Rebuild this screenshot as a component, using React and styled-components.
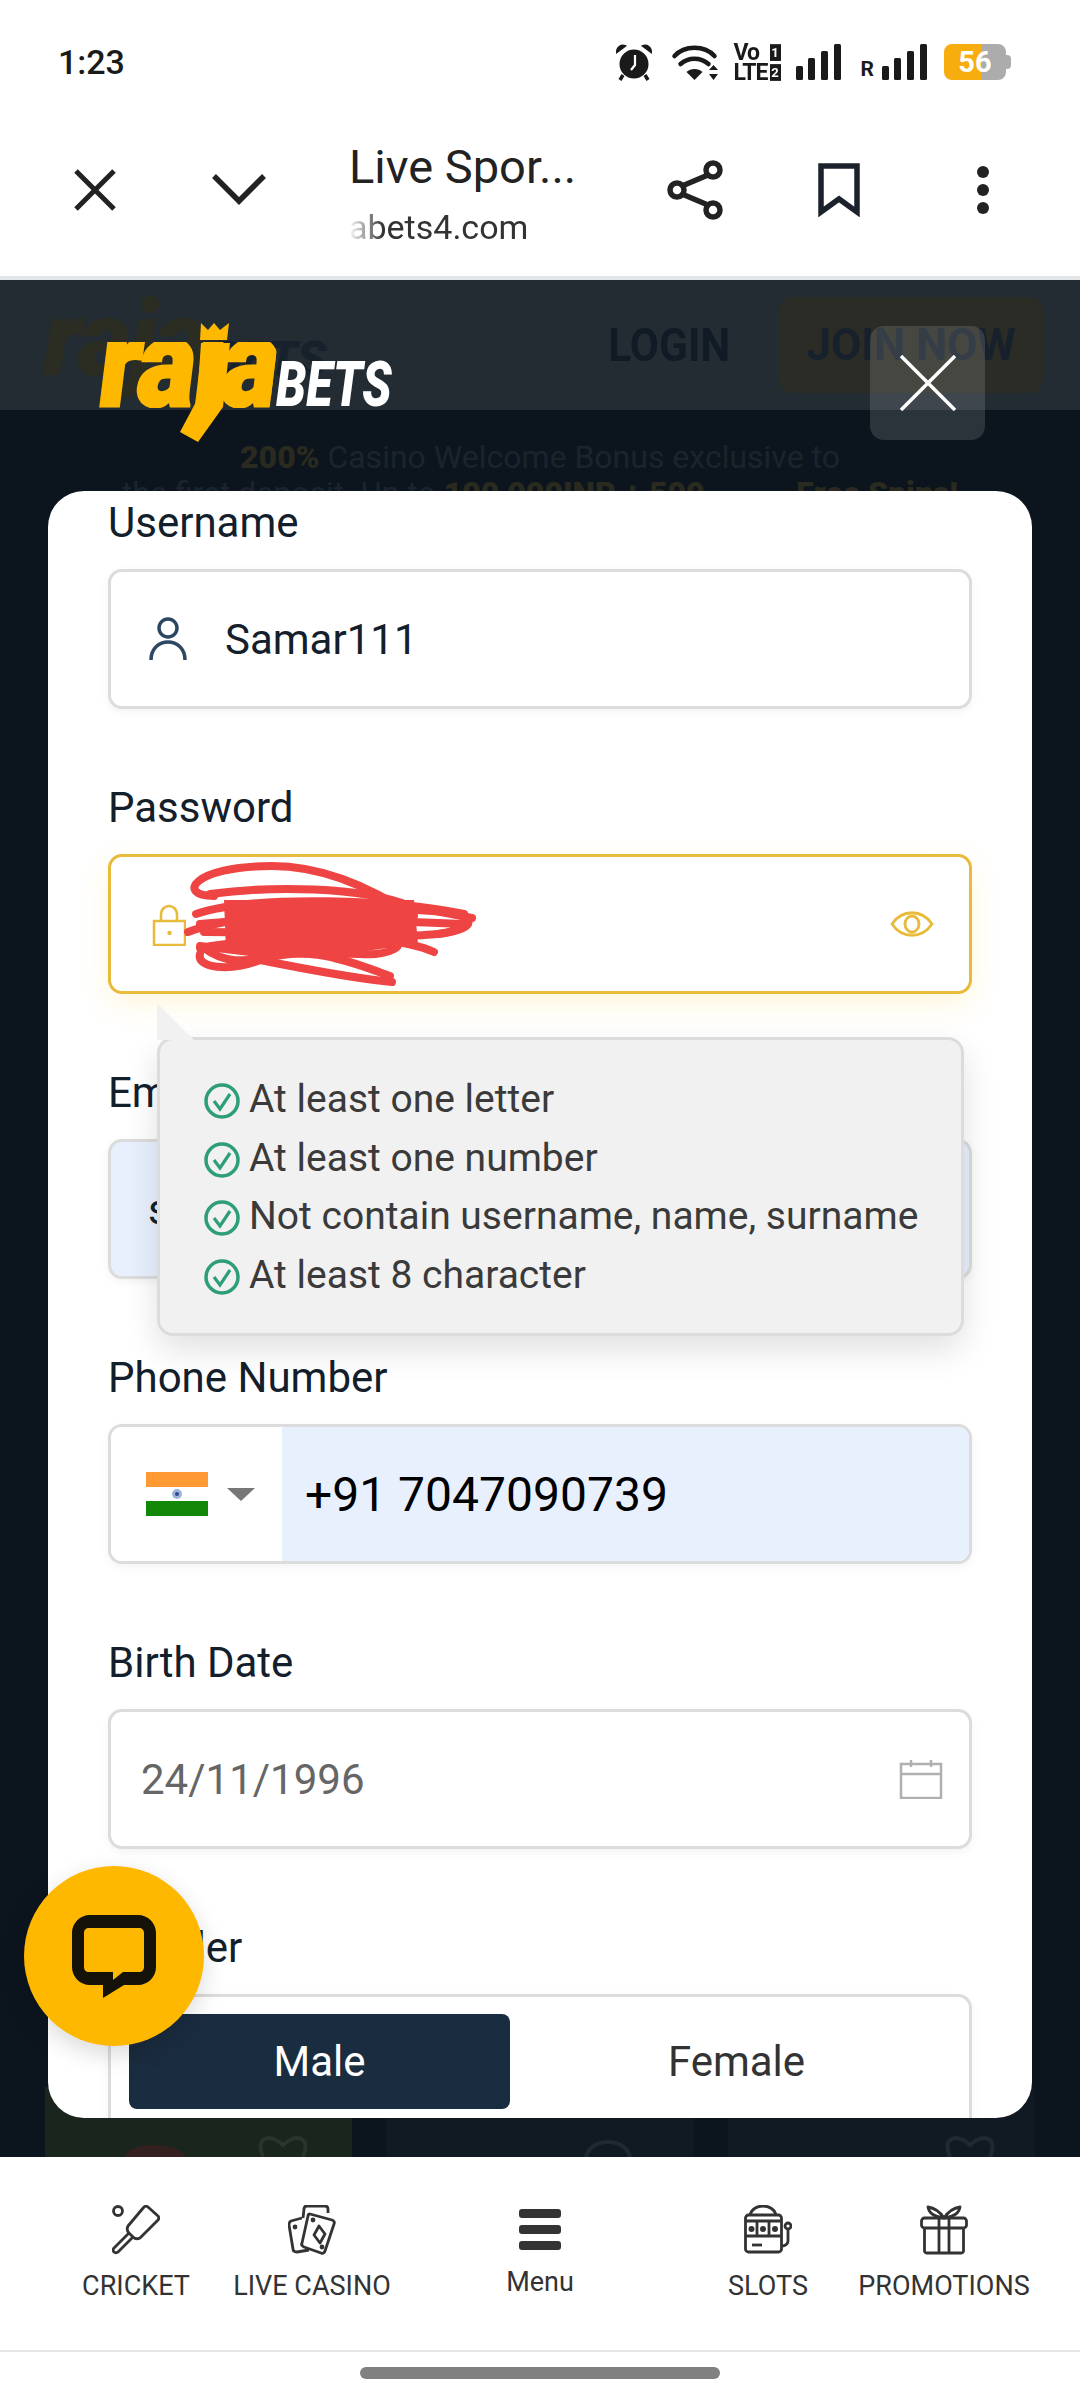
import React from "react";
import styled, { createGlobalStyle } from "styled-components";

const GlobalStyle = createGlobalStyle`
  html, body {
    margin: 0;
    padding: 0;
    background: #fff;
    font-family: Roboto, "Liberation Sans", sans-serif;
  }
  * { box-sizing: border-box; }
`;

const Screen = styled.div`
  width: 1080px;
  height: 2400px;
  display: flex;
  flex-direction: column;
  overflow: hidden;
  background: #fff;
`;

/* status bar */
const StatusBar = styled.div`
  height: 88px;
  flex: none;
  display: flex;
  align-items: center;
  padding: 36px 74px 0 58px;
  color: #1a1a1a;
`;
const Clock = styled.div`
  font-size: 34px;
  font-weight: 500;
  margin-right: auto;
`;
const StatusIcons = styled.div`
  display: flex;
  align-items: center;
  height: 42px;
`;
const AlarmIcon = styled.svg`
  margin-right: 17px;
`;
const NetLabel = styled.div`
  display: grid;
  grid-template-columns: auto auto;
  column-gap: 2px;
  margin: 0 15px 0 12px;
  font-size: 23px;
  line-height: 19px;
  font-weight: 700;
  letter-spacing: -1px;
  transform: scaleY(1.05);
`;
const SimTag = styled.span`
  justify-self: end;
  width: 11px;
  height: 16px;
  margin-top: 2px;
  background: #1a1a1a;
  color: #fff;
  font-size: 13px;
  line-height: 16px;
  text-align: center;
  letter-spacing: 0;
`;
const Roaming = styled.span`
  font-size: 21px;
  font-weight: 700;
  margin: 14px 8px 0 20px;
`;
const Battery = styled.div`
  width: 62px;
  height: 36px;
  margin-left: 17px;
  border-radius: 8px;
  background: linear-gradient(to right, #f8ad0e 0 61%, #acacac 61% 100%);
  color: #fff;
  font-size: 29px;
  font-weight: 700;
  line-height: 36px;
  text-align: center;
  position: relative;
  &::after {
    content: "";
    position: absolute;
    right: -5px;
    top: 11px;
    width: 5px;
    height: 14px;
    border-radius: 0 4px 4px 0;
    background: #acacac;
  }
`;

/* browser bar */
const BrowserBar = styled.div`
  height: 192px;
  flex: none;
  display: flex;
  align-items: center;
  gap: 48px;
  padding: 0 49px 0 47px;
  border-bottom: 4px solid #e3e6e8;
`;
const BarIcon = styled.div`
  width: 96px;
  height: 96px;
  flex: none;
  display: flex;
  align-items: center;
  justify-content: center;
  margin-top: 16px;
`;
const TitleBlock = styled.div`
  flex: 1;
  margin: 24px 16px 0 14px;
  overflow: hidden;
`;
const PageTitle = styled.div`
  font-size: 47px;
  line-height: 54px;
  color: #222;
  white-space: nowrap;
`;
const PageUrl = styled.div`
  font-size: 34px;
  line-height: 44px;
  margin-top: 11px;
  color: #333;
  -webkit-mask-image: linear-gradient(to right, transparent 0, #000 34px);
  mask-image: linear-gradient(to right, transparent 0, #000 34px);
`;

/* site behind the dialog */
const Viewport = styled.div`
  flex: 1;
  position: relative;
  display: flex;
  flex-direction: column;
  background: #0c151e;
  overflow: hidden;
`;
const SiteHeader = styled.div`
  height: 130px;
  flex: none;
  display: flex;
  align-items: center;
  padding: 0 37px 0 43px;
  background: #232b33;
`;
const GhostLogo = styled.div`
  margin-right: auto;
  margin-top: -12px;
  font-weight: 900;
  font-style: italic;
  font-size: 106px;
  line-height: 1;
  letter-spacing: -3px;
  color: #2b2c22;
  white-space: nowrap;
  span {
    font-size: 48px;
    letter-spacing: 0;
    color: #17212b;
    margin-left: 6px;
  }
`;
const GhostLogin = styled.div`
  font-size: 46px;
  font-weight: 700;
  color: #111b25;
  transform: scaleX(0.92);
  margin-right: 44px;
`;
const GhostJoin = styled.div`
  width: 264px;
  height: 96px;
  border-radius: 14px;
  background: #2c2c26;
  color: #17212c;
  font-size: 44px;
  font-weight: 700;
  line-height: 96px;
  text-align: center;
  white-space: nowrap;
`;
const Promo = styled.div`
  margin-top: 29px;
  text-align: center;
  font-size: 32px;
  line-height: 36px;
  color: #1b242d;
  white-space: nowrap;
  b {
    font-weight: 900;
    color: #2a2a1f;
  }
  small {
    font-size: 18px;
    font-weight: 700;
  }
`;
const TileRow = styled.div`
  margin-top: auto;
  display: flex;
  gap: 34px;
  padding: 0 45px;
  height: 70px;
`;
const Tile = styled.div`
  flex: 1;
  background: ${(p) => p.$tint};
  display: flex;
  align-items: flex-end;
`;

/* dialog */
const Overlay = styled.div`
  position: absolute;
  inset: 0;
  padding: 0 48px;
  display: flex;
  flex-direction: column;
`;
const DialogTop = styled.div`
  height: 211px;
  flex: none;
  position: relative;
  display: flex;
`;
const Logo = styled.div`
  position: relative;
  display: flex;
  align-items: flex-start;
  margin: 65px 0 0 52px;
  height: 62px;
`;
const RajaWord = styled.span`
  display: block;
  width: 178px;
  margin: -52px 0 0 -8px;
  font-size: 124px;
  line-height: 142px;
  font-weight: 900;
  letter-spacing: -2px;
  color: #ffb800;
  -webkit-text-stroke: 3px #ffb800;
  transform: scaleX(0.88) skewX(-8deg);
  transform-origin: 0 100%;
  white-space: nowrap;
  clip-path: inset(49px -20px 27px -20px);
`;
const BetsWord = styled.span`
  display: block;
  margin: 4px 0 0 6px;
  font-size: 62px;
  line-height: 72px;
  font-weight: 900;
  font-style: italic;
  color: #fff;
  transform: scaleX(0.78);
  transform-origin: 0 50%;
`;
const LogoMarks = styled.svg`
  position: absolute;
  left: 0;
  top: -25px;
  overflow: visible;
`;
const CloseButton = styled.div`
  width: 115px;
  height: 114px;
  margin: 46px 47px 0 auto;
  border-radius: 14px;
  background: rgba(255, 255, 255, 0.13);
  display: flex;
  align-items: center;
  justify-content: center;
`;
const Dialog = styled.div`
  height: 1627px;
  flex: none;
  padding: 9px 60px 0;
  border-radius: 36px;
  background: #fff;
  overflow: hidden;
`;
const FormGroup = styled.div`
  position: relative;
  margin-bottom: 76px;
`;
const Label = styled.div`
  height: 45px;
  margin-bottom: 24px;
  font-size: 42px;
  line-height: 45px;
  color: #13202c;
`;
const Field = styled.div`
  position: relative;
  height: 140px;
  display: flex;
  align-items: center;
  border: 3px solid ${(p) => (p.$active ? "#e8bb3a" : "#dcdcdc")};
  border-radius: 14px;
  background: ${(p) => (p.$filled ? "#e8f0fe" : "#fff")};
  box-shadow: ${(p) =>
    p.$active
      ? "0 10px 30px rgba(255, 200, 40, 0.16)"
      : "0 3px 10px rgba(0, 0, 0, 0.05)"};
  overflow: ${(p) => (p.$active ? "visible" : "hidden")};
`;
const FieldIcon = styled.div`
  width: 114px;
  flex: none;
  display: flex;
  justify-content: center;
`;
const Value = styled.div`
  font-size: 42px;
  color: ${(p) => p.$color || "#13202c"};
  padding-left: ${(p) => p.$inset || 0}px;
  flex: 1;
`;
const TrailingIcon = styled.div`
  margin-right: ${(p) => p.$gap}px;
  display: flex;
`;
const Scribble = styled.svg`
  position: absolute;
  left: 69px;
  top: -3px;
`;
const FlagBox = styled.div`
  width: 171px;
  height: 100%;
  flex: none;
  display: flex;
  align-items: center;
  gap: 19px;
  padding-left: 35px;
  background: #fff;
`;
const Caret = styled.div`
  width: 0;
  height: 0;
  border-left: 14px solid transparent;
  border-right: 14px solid transparent;
  border-top: 13px solid #777;
`;
const PhoneValue = styled.div`
  flex: 1;
  height: 100%;
  display: flex;
  align-items: center;
  padding-left: 23px;
  background: #e8f0fe;
  color: #000;
  font-size: 48px;
`;
const Segments = styled.div`
  display: flex;
  width: 100%;
  height: 100%;
  padding: 17px 6px 17px 18px;
`;
const Segment = styled.div`
  flex: ${(p) => (p.$on ? "0 0 381px" : "1")};
  height: 95px;
  border-radius: 8px;
  background: ${(p) => (p.$on ? "#1a2c3f" : "transparent")};
  color: ${(p) => (p.$on ? "#fff" : "#333")};
  font-size: 42px;
  line-height: 95px;
  text-align: center;
`;

/* password tooltip */
const Rules = styled.div`
  position: absolute;
  left: 49px;
  top: 252px;
  z-index: 2;
  width: 807px;
  height: 299px;
  padding: 30px 0 0 44px;
  border: 3px solid #dcdcdc;
  border-radius: 16px;
  background: #f1f1f1;
  box-shadow: 0 14px 34px rgba(0, 0, 0, 0.12);
  &::before {
    content: "";
    position: absolute;
    left: -3px;
    top: -37px;
    width: 37px;
    height: 37px;
    background: #f1f1f1;
    clip-path: polygon(0 0, 0 100%, 100% 100%);
  }
`;
const RuleRow = styled.div`
  height: 58.5px;
  display: flex;
  align-items: center;
  gap: 9px;
  font-size: 39px;
  color: #3a3a3a;
  white-space: nowrap;
`;
const RuleCheck = styled.svg`
  flex: none;
  margin-top: 4px;
`;

const ChatButton = styled.div`
  position: absolute;
  left: 24px;
  top: 1586px;
  width: 180px;
  height: 180px;
  border-radius: 50%;
  background: #ffb800;
  box-shadow: 0 8px 24px rgba(0, 0, 0, 0.15);
  display: flex;
  align-items: center;
  justify-content: center;
`;

/* bottom nav */
const BottomNav = styled.div`
  height: 243px;
  flex: none;
  display: flex;
  flex-direction: column;
  background: #fff;
`;
const NavGrid = styled.div`
  height: 195px;
  flex: none;
  display: grid;
  grid-template-columns: 176px 176px 280px 176px 176px;
  padding: 48px 48px 0;
  border-bottom: 2px solid #e6e6e6;
`;
const NavItem = styled.div`
  display: flex;
  flex-direction: column;
  align-items: center;
  color: #333;
  white-space: nowrap;
`;
const NavIcon = styled.svg`
  display: block;
  margin-top: ${(p) => p.$drop || 0}px;
`;
const NavLabel = styled.div`
  margin-top: 14px;
  font-size: 27px;
  line-height: 34px;
  color: #333;
`;
const HomePill = styled.div`
  width: 360px;
  height: 12px;
  margin: 15px auto 0;
  border-radius: 6px;
  background: #808080;
`;

const RULES = [
  "At least one letter",
  "At least one number",
  "Not contain username, name, surname",
  "At least 8 character",
];

function CheckCircle() {
  return (
    <RuleCheck width="36" height="36" viewBox="0 0 36 36" fill="none" stroke="#2e9e77">
      <circle cx="18" cy="18" r="16" strokeWidth="3.500" />
      <path d="M10 18l6 8 10-15" strokeWidth="3.200" />
    </RuleCheck>
  );
}

function SignalBars() {
  return (
    <svg width="45" height="36" viewBox="0 0 45 36" fill="#1a1a1a">
      <rect x="0" y="22" width="7" height="14" rx="1.500" />
      <rect x="12" y="14" width="7" height="22" rx="1.500" />
      <rect x="25" y="7" width="7" height="29" rx="1.500" />
      <rect x="38" y="0" width="7" height="36" rx="1.500" />
    </svg>
  );
}

export default function App() {
  return (
    <Screen>
      <GlobalStyle />
      <StatusBar>
        <Clock>1:23</Clock>
        <StatusIcons>
          <AlarmIcon width="40" height="40" viewBox="0 0 40 40">
            <circle cx="20" cy="22" r="14.500" fill="#1a1a1a" />
            <path d="M3 10a6 6 0 0 1 8-6zM37 10a6 6 0 0 0-8-6z" fill="#1a1a1a" stroke="#1a1a1a" strokeWidth="2" />
            <path d="M9 33l-3 5M31 33l3 5" stroke="#1a1a1a" strokeWidth="3.500" />
            <path d="M21 13v10l-4 5" stroke="#fff" strokeWidth="2.200" fill="none" />
          </AlarmIcon>
          <svg width="50" height="36" viewBox="0 0 47 36" fill="none" stroke="#1a1a1a" strokeLinecap="round">
            <path d="M2 12C12 1 32 1 42 12" strokeWidth="4.500" />
            <path d="M8 20c8-7 20-7 28 0" strokeWidth="4.500" />
            <path d="M22 36l-8-8c4-4 12-4 16 0z" fill="#1a1a1a" stroke="none" />
            <path d="M41 21l4.500 5h-9zM41 36l4.500-6h-9z" fill="#1a1a1a" stroke="none" />
          </svg>
          <NetLabel>
            <span>Vo</span>
            <SimTag>1</SimTag>
            <span>LTE</span>
            <SimTag>2</SimTag>
          </NetLabel>
          <SignalBars />
          <Roaming>R</Roaming>
          <SignalBars />
          <Battery>56</Battery>
        </StatusIcons>
      </StatusBar>

      <BrowserBar>
        <BarIcon>
          <svg width="44" height="44" viewBox="0 0 44 44" stroke="#222" strokeWidth="5" fill="none">
            <path d="M3 3l38 38M41 3L3 41" />
          </svg>
        </BarIcon>
        <BarIcon>
          <svg width="56" height="34" viewBox="0 0 56 34" stroke="#222" strokeWidth="5.500" fill="none">
            <path d="M3 3l25 25L53 3" />
          </svg>
        </BarIcon>
        <TitleBlock>
          <PageTitle>Live Spor...</PageTitle>
          <PageUrl>abets4.com</PageUrl>
        </TitleBlock>
        <BarIcon>
          <svg width="56" height="60" viewBox="0 0 56 60" stroke="#222" strokeWidth="5.500" fill="none">
            <circle cx="46" cy="10" r="7" />
            <circle cx="10" cy="30" r="7" />
            <circle cx="46" cy="50" r="7" />
            <path d="M41 15L15 26M15 34l26 11" />
          </svg>
        </BarIcon>
        <BarIcon>
          <svg width="42" height="54" viewBox="0 0 42 54" stroke="#1c222b" strokeWidth="5.500" fill="none">
            <path d="M3 3h36v46L21 36 3 49z" />
          </svg>
        </BarIcon>
        <BarIcon>
          <svg width="14" height="48" viewBox="0 0 14 48" fill="#222">
            <circle cx="7" cy="6" r="6" />
            <circle cx="7" cy="24" r="6" />
            <circle cx="7" cy="42" r="6" />
          </svg>
        </BarIcon>
      </BrowserBar>

      <Viewport>
        <SiteHeader>
          <GhostLogo>
            raja<span>BETS</span>
          </GhostLogo>
          <GhostLogin>LOGIN</GhostLogin>
          <GhostJoin>JOIN NOW</GhostJoin>
        </SiteHeader>
        <Promo>
          <b>200%</b> Casino Welcome Bonus exclusive to
          <br />
          the first deposit. Up to <b>100 000INR + 500</b> <small>CHICKEN</small> <b>Free Spins!</b>
        </Promo>
        <TileRow>
          <Tile $tint="#1a251d">
            <svg width="305" height="30" viewBox="0 0 305 30" fill="none">
              <path d="M80 30c2-16 56-16 60 0" fill="#33201f" />
              <path d="M218 30c-8-20 6-24 20-12 14-12 28-8 20 12" stroke="#29342b" strokeWidth="4" />
            </svg>
          </Tile>
          <Tile $tint="#111a23">
            <svg width="305" height="20" viewBox="0 0 305 20" fill="none" stroke="#1f2932" strokeWidth="4">
              <path d="M200 20c4-20 40-20 44 0" />
            </svg>
          </Tile>
          <Tile $tint="#111a23">
            <svg width="305" height="30" viewBox="0 0 305 30" fill="none" stroke="#1f2932" strokeWidth="4">
              <path d="M222 30c-8-20 6-24 20-12 14-12 28-8 20 12" />
            </svg>
          </Tile>
        </TileRow>

        <Overlay>
          <DialogTop>
            <Logo>
              <RajaWord>raja</RajaWord>
              <BetsWord>BETS</BetsWord>
              <LogoMarks width="178" height="120" viewBox="100 320 178 120" fill="#ffb800">
                <path d="M201 323l7 7 6-7 6 7 9-7-2 17h-27z" />
                <path d="M201 343h29l-7 64-25 35-18-10 17-32z" />
              </LogoMarks>
            </Logo>
            <CloseButton>
              <svg width="56" height="56" viewBox="0 0 56 56" stroke="#fff" strokeWidth="3.500">
                <path d="M1 1l54 54M55 1L1 55" />
              </svg>
            </CloseButton>
          </DialogTop>
          <Dialog>
            <FormGroup>
              <Label>Username</Label>
              <Field>
                <FieldIcon>
                  <svg width="38" height="44" viewBox="0 0 38 44" fill="none" stroke="#2b4761" strokeWidth="3.500">
                    <circle cx="19" cy="11" r="9" />
                    <path d="M2 43c0-24 34-24 34 0" />
                  </svg>
                </FieldIcon>
                <Value>Samar111</Value>
              </Field>
            </FormGroup>

            <FormGroup>
              <Label>Password</Label>
              <Field $active>
                <FieldIcon>
                  <svg width="36" height="44" viewBox="-2 -2 36 44" fill="none" stroke="#e8bb3a" strokeWidth="2.500">
                    <path d="M9 17V11c0-12 16-12 16 0v6" />
                    <rect x="2" y="17" width="31" height="24" />
                    <circle cx="17.500" cy="29" r="1" fill="#e8bb3a" />
                  </svg>
                </FieldIcon>
                <Value />
                <TrailingIcon $gap={35}>
                  <svg width="44" height="28" viewBox="0 0 44 28" fill="none" stroke="#e8bb3a" strokeWidth="2.800">
                    <path d="M2 14C12 -1 32 -1 42 14 32 29 12 29 2 14z" />
                    <ellipse cx="22" cy="14" rx="7" ry="8" />
                  </svg>
                </TrailingIcon>
                <Scribble width="300" height="135" viewBox="0 0 300 135" fill="none" stroke="#ef4444" strokeWidth="8" strokeLinecap="round" strokeLinejoin="round">
                  <path d="M44 46h190l4 44-60 8H46z" fill="#ef4444" stroke="none" />
                  <path d="M34 42C-4 42 12 12 92 12c60 0 112 30 142 50" />
                  <path d="M30 40c60-8 150-8 200 12l62 12" />
                  <path d="M16 60c60-20 200-14 268 0" />
                  <path d="M8 78c60-22 210-28 270-18 20 8 10 16-20 20" />
                  <path d="M20 70c60-6 180-4 264 0-6 12-50 12-90 12" />
                  <path d="M24 78c40 0 190 0 230 20" />
                  <path d="M20 94c30-6 120-14 190-8 20 4 0 16-30 14l-110-2-50-6" />
                  <path d="M24 94c40 30 70-6 130 10 20 4 50 16 56 18" />
                  <path d="M20 100c-4 14 30 18 60 6 30 6 90 18 132 22" />
                </Scribble>
              </Field>
              <Rules>
                {RULES.map((rule) => (
                  <RuleRow key={rule}>
                    <CheckCircle />
                    {rule}
                  </RuleRow>
                ))}
              </Rules>
            </FormGroup>

            <FormGroup>
              <Label>Email</Label>
              <Field $filled>
                <Value $inset={37}>s</Value>
              </Field>
            </FormGroup>

            <FormGroup>
              <Label>Phone Number</Label>
              <Field>
                <FlagBox>
                  <svg width="62" height="44" viewBox="0 0 62 44">
                    <rect width="62" height="15" fill="#ff9933" />
                    <rect y="15" width="62" height="15" fill="#fff" />
                    <rect y="29" width="62" height="15" fill="#138808" />
                    <circle cx="31" cy="22" r="5" fill="#9fb3d9" />
                    <circle cx="31" cy="22" r="2" fill="#2a4a8c" />
                  </svg>
                  <Caret />
                </FlagBox>
                <PhoneValue>+91 7047090739</PhoneValue>
              </Field>
            </FormGroup>

            <FormGroup>
              <Label>Birth Date</Label>
              <Field>
                <Value $inset={30} $color="#666">24/11/1996</Value>
                <TrailingIcon $gap={26}>
                  <svg width="44" height="40" viewBox="0 0 44 40" fill="none" stroke="#b0b0b0" strokeWidth="2.500">
                    <rect x="2" y="5" width="40" height="34" />
                    <path d="M2 15h40M12 1v7M32 1v7" />
                  </svg>
                </TrailingIcon>
              </Field>
            </FormGroup>

            <FormGroup>
              <Label>Gender</Label>
              <Field>
                <Segments>
                  <Segment $on>Male</Segment>
                  <Segment>Female</Segment>
                </Segments>
              </Field>
            </FormGroup>
          </Dialog>
        </Overlay>

        <ChatButton>
          <svg width="84" height="83" viewBox="0 0 84 83" fill="#15120a" fillRule="evenodd">
            <path d="M18 0H66C76 0 84 8 84 18V52C84 62 76 70 66 70H52L31 83V70H18C8 70 0 62 0 52V18C0 8 8 0 18 0ZM17 13C14 13 12 15 12 18V52C12 55 14 57 17 57H41V65L51 57H67C70 57 72 55 72 52V18C72 15 70 13 67 13Z" />
          </svg>
        </ChatButton>
      </Viewport>

      <BottomNav>
        <NavGrid>
          <NavItem>
            <NavIcon width="48" height="50" viewBox="0 0 48 50" fill="none" stroke="#333" strokeWidth="2.800" strokeLinejoin="round">
              <circle cx="6" cy="6" r="4.500" />
              <path d="M36 2l10 9c1 1 1 3 0 4L28 33c-2 1-5 1-7-1l-4-4c-2-2-2-5-1-7L32 2c1-1 3-1 4 0z" />
              <path d="M17 28L2 43c-1 1-1 3 0 4s3 1 4 0l15-15" />
            </NavIcon>
            <NavLabel>CRICKET</NavLabel>
          </NavItem>
          <NavItem>
            <NavIcon width="48" height="50" viewBox="0 0 48 50" fill="none" stroke="#333" strokeWidth="2.800" strokeLinejoin="round">
              <path d="M15 13l1-9c0-2 1-3 3-3h18c2 0 3 1 3 3v4" />
              <path d="M22 9l22 6c2 1 3 2 2 4l-9 27c-1 2-2 3-4 2L16 42c-2-1-3-2-2-4l6-27c0-2 1-2 2-2z" />
              <path d="M14 13L3 16c-2 1-2 2-2 4l4 24c0 2 2 3 4 3l12-2" />
              <path d="M31 21l6 8-5 9-6-8z" />
              <circle cx="25" cy="15" r="1" fill="#333" />
              <circle cx="34" cy="42" r="1" fill="#333" />
              <circle cx="7" cy="22" r="1" fill="#333" />
            </NavIcon>
            <NavLabel>LIVE CASINO</NavLabel>
          </NavItem>
          <NavItem>
            <NavIcon width="42" height="42" viewBox="0 0 42 42" fill="#333" $drop={4}>
              <rect y="0" width="42" height="9" rx="3" />
              <rect y="16" width="42" height="9" rx="3" />
              <rect y="32" width="42" height="9" rx="3" />
            </NavIcon>
            <NavLabel>Menu</NavLabel>
          </NavItem>
          <NavItem>
            <NavIcon width="48" height="50" viewBox="0 0 48 50" fill="none" stroke="#333" strokeWidth="2.800" strokeLinejoin="round">
              <path d="M6 10C9 -2 29 -2 32 10" />
              <rect x="1.500" y="10" width="36" height="37" rx="3" />
              <path d="M1.500 16h36M1.500 31h36M13 16v15M25 16v15" />
              <circle cx="7.500" cy="24" r="1.600" fill="#333" />
              <circle cx="19" cy="24" r="1.600" fill="#333" />
              <circle cx="31" cy="24" r="1.600" fill="#333" />
              <path d="M8 40h10" />
              <circle cx="44" cy="21" r="3" />
              <path d="M44 24v12c0 3-3 5-6 5" />
            </NavIcon>
            <NavLabel>SLOTS</NavLabel>
          </NavItem>
          <NavItem>
            <NavIcon width="48" height="50" viewBox="0 0 48 50" fill="none" stroke="#333" strokeWidth="2.800" strokeLinejoin="round">
              <rect x="1.500" y="13" width="45" height="10" rx="3" />
              <path d="M4.500 23v23c0 1 1 2 2 2h35c1 0 2-1 2-2V23M19 13v35M29 13v35" />
              <path d="M24 13C20 7 15 3 8 2c1 6 6 10 16 11zM24 13c4-6 9-10 16-11-1 6-6 10-16 11z" />
            </NavIcon>
            <NavLabel>PROMOTIONS</NavLabel>
          </NavItem>
        </NavGrid>
        <HomePill />
      </BottomNav>
    </Screen>
  );
}
